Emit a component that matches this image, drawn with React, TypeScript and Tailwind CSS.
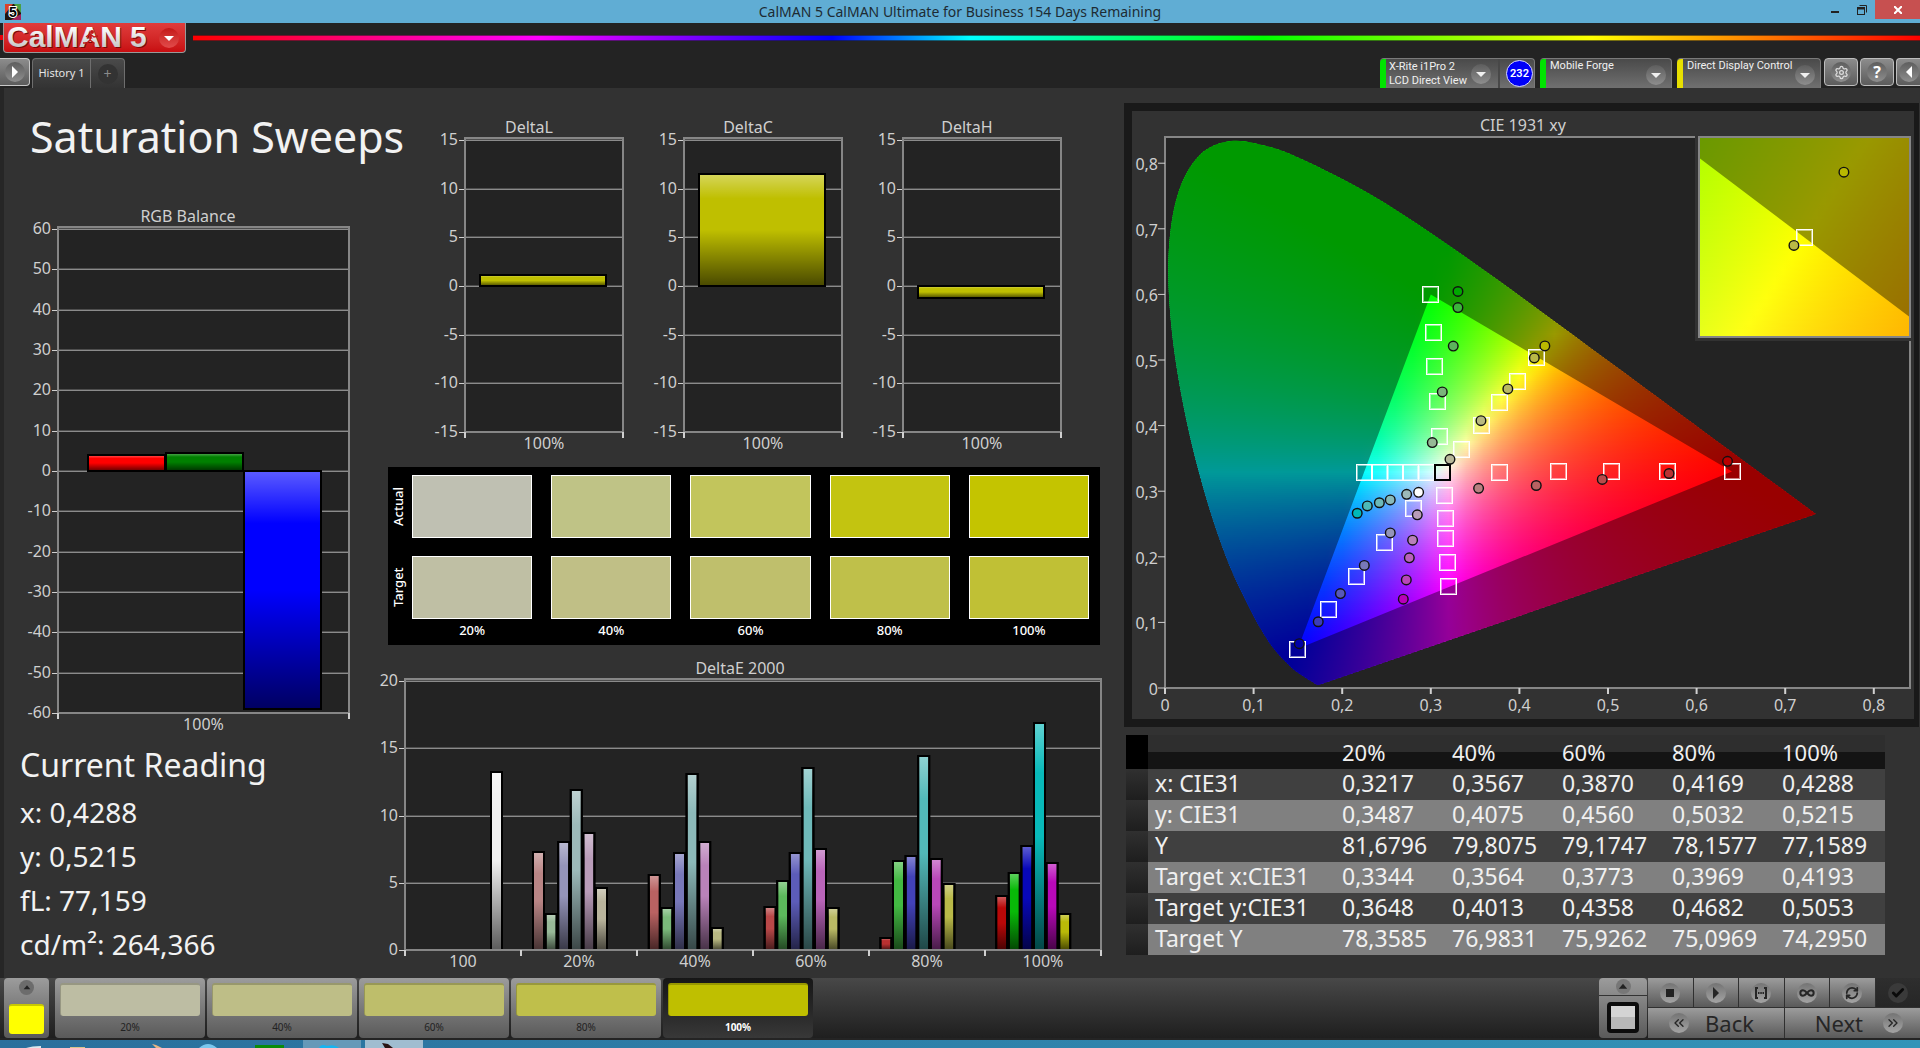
import React, { useMemo } from 'react';
import { Settings, RefreshCw, Infinity as InfinityIcon, Check, ChevronsLeft, ChevronsRight } from 'lucide-react';

interface Bar {
  x: number;
  width: number;
  value: number;
  color: string;
}

interface ColumnChartProps {
  title: string;
  titleX: number;
  width: number;
  height: number;
  plot: { left: number; top: number; right: number; bottom: number };
  min: number;
  max: number;
  step: number;
  categories: string[];
  bars: Bar[];
}

type Point = [number, number];

const ColumnChart: React.FC<ColumnChartProps> = ({ title, titleX, width, height, plot, min, max, step, categories, bars }) => {
  const top = plot.top + 2;
  const toY = (v: number) => Math.round(top + ((max - v) / (max - min)) * (plot.bottom - top));
  const ticks: number[] = [];
  for (let v = min; v <= max; v += step) ticks.push(v);
  const slot = (plot.right - plot.left) / categories.length;
  const id = title.replace(/\s/g, '');

  return (
    <svg viewBox={`0 0 ${width} ${height}`} className="block h-auto w-full" fontSize="16" fill="#cfcfcf">
      <defs>
        <linearGradient id={`shade-${id}`} x1="0" y1="0" x2="0" y2="1">
          <stop offset="0" stopColor="#fff" stopOpacity="0.36" />
          <stop offset="0.22" stopColor="#fff" stopOpacity="0" />
          <stop offset="0.5" stopColor="#000" stopOpacity="0" />
          <stop offset="1" stopColor="#000" stopOpacity="0.62" />
        </linearGradient>
      </defs>
      <text x={titleX} y={plot.top - 5} textAnchor="middle">{title}</text>
      <rect x={plot.left} y={plot.top} width={plot.right - plot.left} height={plot.bottom - plot.top} fill="#232323" />
      {ticks.map((v) => (
        <g key={v} shapeRendering="crispEdges">
          <rect x={plot.left} y={toY(v) - 1} width={plot.right - plot.left} height="1" fill="#4e4e4e" />
          <rect x={plot.left} y={toY(v)} width={plot.right - plot.left} height="1" fill="#8b8b8b" />
          <rect x={plot.left - 6} y={toY(v)} width="6" height="1" fill="#d0d0d0" />
          <text x={plot.left - 7} y={toY(v) + 5} textAnchor="end">{v}</text>
        </g>
      ))}
      {bars.map((bar, i) => {
        const y = Math.min(toY(bar.value), toY(0));
        const h = Math.abs(toY(bar.value) - toY(0));
        return (
          <g key={i} stroke="#000" strokeWidth="2">
            <rect x={bar.x} y={y} width={bar.width} height={h} fill={bar.color} />
            <rect x={bar.x} y={y} width={bar.width} height={h} fill={`url(#shade-${id})`} />
          </g>
        );
      })}
      <rect x={plot.left} y={plot.top} width={plot.right - plot.left} height={plot.bottom - plot.top} fill="none" stroke="#868686" strokeWidth="2" />
      {categories.map((c, i) => (
        <text key={c} x={plot.left + slot * (i + 0.5)} y={plot.bottom + 17} textAnchor="middle">{c}</text>
      ))}
      {[...categories, 'end'].map((c, i) => (
        <rect key={c} x={plot.left + slot * i - 1} y={plot.bottom} width="2" height="6" fill="#d0d0d0" />
      ))}
    </svg>
  );
};

// Spectral locus, CIE 1931 2 degree observer
const LOCUS: Point[] = [
  [0.1741, 0.005], [0.1714, 0.0051], [0.1644, 0.0109], [0.1566, 0.0177], [0.144, 0.0297], [0.1241, 0.0578],
  [0.1096, 0.0868], [0.0913, 0.1327], [0.0687, 0.2007], [0.0454, 0.295], [0.0235, 0.4127], [0.0082, 0.5384],
  [0.0039, 0.6548], [0.0139, 0.7502], [0.0389, 0.812], [0.0743, 0.8338], [0.1142, 0.8262], [0.1547, 0.8059],
  [0.2296, 0.7543], [0.3016, 0.6923], [0.3731, 0.6245], [0.4441, 0.5547], [0.5125, 0.4866], [0.5752, 0.4242],
  [0.627, 0.3725], [0.6658, 0.334], [0.6915, 0.3083], [0.719, 0.2809], [0.7347, 0.2653],
];

const GAMUT: Point[] = [[0.64, 0.33], [0.3, 0.6], [0.15, 0.06]];

const TARGETS: Point[] = [
  [0.3766, 0.329], [0.444, 0.331], [0.504, 0.331], [0.567, 0.331], [0.64, 0.331],
  [0.299, 0.6], [0.3025, 0.542], [0.304, 0.4905], [0.3074, 0.437], [0.3096, 0.3835],
  [0.3344, 0.3648], [0.3564, 0.4013], [0.3773, 0.4358], [0.3969, 0.4682], [0.4193, 0.5053],
  [0.2243, 0.329], [0.242, 0.329], [0.2602, 0.329], [0.277, 0.329], [0.2946, 0.329],
  [0.3145, 0.294], [0.3163, 0.2597], [0.3163, 0.2285], [0.318, 0.1917], [0.3194, 0.1556],
  [0.2795, 0.275], [0.2475, 0.223], [0.216, 0.1715], [0.184, 0.12], [0.1486, 0.06],
];

const MEASURED: [number, number, string][] = [
  [0.354, 0.3044, '#b98080'], [0.4191, 0.3087, '#b96262'], [0.4936, 0.318, '#b94a4a'], [0.569, 0.327, '#b93232'], [0.635, 0.3455, '#b80000'],
  [0.3307, 0.6045, '#00a800'], [0.3307, 0.58, '#3cb43c'], [0.3254, 0.5212, '#5cb45c'], [0.313, 0.4514, '#7ab47a'], [0.3017, 0.3742, '#96b896'],
  [0.3217, 0.3487, '#b9b99a'], [0.3567, 0.4075, '#b9b980'], [0.387, 0.456, '#b9b962'], [0.4169, 0.5032, '#b9b946'], [0.4288, 0.5215, '#b9b900'],
  [0.2863, 0.2983, '#ffffff'],
  [0.2728, 0.2952, '#9cb9b9'], [0.2543, 0.2867, '#88b9b9'], [0.242, 0.2824, '#6cb9b9'], [0.2284, 0.2775, '#4cb9b9'], [0.217, 0.2664, '#00b9b9'],
  [0.2848, 0.264, '#b99cb9'], [0.2795, 0.2254, '#b980b9'], [0.2758, 0.1985, '#b962b9'], [0.2724, 0.1648, '#b946b9'], [0.269, 0.1354, '#b900b9'],
  [0.2543, 0.2364, '#9494b9'], [0.225, 0.1868, '#7878b9'], [0.198, 0.144, '#5858b9'], [0.173, 0.101, '#3c3cb9'], [0.1516, 0.0675, '#0000a8'],
];

// Brightest in-range RGB for a chromaticity, negative channels cut to zero
const chromaColor = (x: number, y: number) => {
  const X = x / y;
  const Z = (1 - x - y) / y;
  const rgb = [
    3.2406 * X - 1.5372 - 0.4986 * Z,
    -0.9689 * X + 1.8758 + 0.0415 * Z,
    0.0557 * X - 0.204 + 1.057 * Z,
  ].map((c) => Math.max(0, c));
  const peak = Math.max(...rgb);
  return `rgb(${rgb.map((c) => Math.round((c / peak) * 255)).join(',')})`;
};

interface MarkerProps {
  x: number;
  y: number;
  color: string;
}

const TargetMarker: React.FC<MarkerProps> = ({ x, y, color }) => (
  <g fill="none" stroke={color}>
    <rect x={Math.round(x) - 7.5} y={Math.round(y) - 7.5} width="16" height="16" />
    <rect x={Math.round(x) - 6.5} y={Math.round(y) - 6.5} width="14" height="14" strokeOpacity="0.5" />
  </g>
);

interface Domain {
  x0: number;
  x1: number;
  y0: number;
  y1: number;
}

interface ChromaFieldProps {
  id: string;
  left: number;
  top: number;
  width: number;
  height: number;
  domain: Domain;
  colorStep: number;
}

const ChromaField: React.FC<ChromaFieldProps> = ({ id, left, top, width, height, domain, colorStep }) => {
  const { x0, x1, y0, y1 } = domain;
  const sx = (x: number) => left + ((x - x0) / (x1 - x0)) * width;
  const sy = (y: number) => top + ((y1 - y) / (y1 - y0)) * height;

  const rows = useMemo(() => {
    const out = [];
    const end = Math.min(x1, 0.76);
    const count = Math.ceil((end - x0) / colorStep);
    for (let row = 0; row < height; row += 2) {
      const y = Math.max(0.002, y1 - ((row + 1) / height) * (y1 - y0));
      const stops = [];
      for (let i = 0; i <= count; i++) {
        stops.push(<stop key={i} offset={i / count} stopColor={chromaColor(x0 + ((end - x0) * i) / count, y)} />);
      }
      out.push(
        <g key={row}>
          <linearGradient id={`${id}-${row}`} gradientUnits="userSpaceOnUse" x1={sx(x0)} x2={sx(end)} y1="0" y2="0">{stops}</linearGradient>
          <rect x={left} y={top + row} width={sx(end) - left} height="3" fill={`url(#${id}-${row})`} />
        </g>
      );
    }
    return out;
  }, []);

  let locus = `M${sx(LOCUS[0][0])} ${sy(LOCUS[0][1])}`;
  for (let i = 0; i < LOCUS.length - 1; i++) {
    const a = LOCUS[Math.max(0, i - 1)];
    const b = LOCUS[i];
    const c = LOCUS[i + 1];
    const d = LOCUS[Math.min(LOCUS.length - 1, i + 2)];
    locus += `C${sx(b[0] + (c[0] - a[0]) / 6)} ${sy(b[1] + (c[1] - a[1]) / 6)} ${sx(c[0] - (d[0] - b[0]) / 6)} ${sy(c[1] - (d[1] - b[1]) / 6)} ${sx(c[0])} ${sy(c[1])}`;
  }
  locus += 'Z';
  const triangle = `M${GAMUT.map(([x, y]) => `${sx(x)} ${sy(y)}`).join('L')}Z`;
  const inside = ([x, y]: Point) => x > x0 && x < x1 && y > y0 && y < y1;

  return (
    <g>
      <clipPath id={`${id}-frame`}><rect x={left} y={top} width={width} height={height} /></clipPath>
      <clipPath id={`${id}-locus`}><path d={locus} /></clipPath>
      <g clipPath={`url(#${id}-frame)`}>
        <g clipPath={`url(#${id}-locus)`}>
          {rows}
          <path d={`M${left} ${top}h${width}v${height}h${-width}Z${triangle}`} fill="#000" fillOpacity="0.4" fillRule="evenodd" />
        </g>
      </g>
      {TARGETS.filter(inside).map(([x, y], i) => (
        <TargetMarker key={i} x={sx(x)} y={sy(y)} color="#fff" />
      ))}
      {inside([0.3127, 0.329]) && (
        <rect x={Math.round(sx(0.3127)) - 7} y={Math.round(sy(0.329)) - 7} width="15" height="15" fill="none" stroke="#000" strokeWidth="2" />
      )}
      {MEASURED.filter(([x, y]) => inside([x, y])).map(([x, y, color], i) => (
        <circle key={i} cx={sx(x)} cy={sy(y)} r="4.800" fill={color} stroke="#111" strokeWidth="1.400" />
      ))}
    </g>
  );
};

const CieChart = () => {
  const left = 33;
  const bottom = 577;
  const xTicks = [0, 1, 2, 3, 4, 5, 6, 7, 8];
  const label = (n: number) => (n === 0 ? '0' : `0,${n}`);
  return (
    <svg viewBox="0 0 782 608" className="block h-auto w-full" fontSize="16" fill="#cfcfcf">
      <text x="391" y="20" textAnchor="middle">CIE 1931 xy</text>
      <rect x={left} y="26" width="745" height="551" fill="#232323" />
      <ChromaField id="gamut" left={left} top={26} width={745} height={551} domain={{ x0: 0, x1: 0.841, y0: 0, y1: 0.84 }} colorStep={0.02} />
      <rect x={left} y="26" width="745" height="551" fill="none" stroke="#868686" strokeWidth="2" />
      {xTicks.map((n) => (
        <g key={n}>
          <rect x={left + n * 88.6 - 1} y={bottom} width="2" height="6" fill="#d0d0d0" />
          <text x={left + n * 88.6} y="600" textAnchor="middle">{label(n)}</text>
          <rect x={left - 7} y={bottom - n * 65.6 - 0.5} width="7" height="1" fill="#d0d0d0" />
          <text x={left - 7} y={bottom - n * 65.6 + 7} textAnchor="end">{label(n)}</text>
        </g>
      ))}
      <rect x="563" y="22" width="219" height="208" fill="#323232" />
      <ChromaField id="inset" left={567} top={26} width={210} height={200} domain={{ x0: 0.3943, x1: 0.4443, y0: 0.4803, y1: 0.5303 }} colorStep={0.002} />
      <rect x="567" y="26" width="211" height="200" fill="none" stroke="#868686" strokeWidth="2" />
    </svg>
  );
};

const SERIES = [
  { label: '20%', colors: ['#b98585', '#98b998', '#9494b9', '#9cb9b9', '#b99cb9', '#b9b49c'], values: [7.3, 2.7, 8.0, 11.9, 8.7, 4.6] },
  { label: '40%', colors: ['#b96262', '#7ab97a', '#7878b9', '#8cb9b9', '#b982b9', '#b9b982'], values: [5.6, 3.1, 7.2, 13.1, 8.0, 1.6] },
  { label: '60%', colors: ['#b94848', '#5cb95c', '#5c5cb9', '#6eb9b9', '#b964b9', '#b9b964'], values: [3.2, 5.1, 7.2, 13.5, 7.5, 3.1] },
  { label: '80%', colors: ['#b93030', '#42b942', '#4242b9', '#52b9b9', '#b948b9', '#b9b948'], values: [0.9, 6.6, 7.0, 14.4, 6.8, 4.9] },
  { label: '100%', colors: ['#b90808', '#08b908', '#0808b9', '#08b9b9', '#b908b9', '#b9b908'], values: [4.0, 5.7, 7.7, 16.9, 6.5, 2.7] },
];

const DELTA_E_BARS: Bar[] = [
  { x: 115, width: 11, value: 13.2, color: '#f0f0f0' },
  ...SERIES.flatMap((s, g) =>
    s.values.map((value, i) => ({ x: 157 + 115.8 * g + i * 12.6, width: 11, value, color: s.colors[i] }))
  ),
];

const DELTAS = [
  { title: 'DeltaL', value: 1.1 },
  { title: 'DeltaC', value: 11.5 },
  { title: 'DeltaH', value: -1.2 },
];

const SWATCHES = [
  { label: '20%', actual: 'bg-[#bfc0b2]', target: 'bg-[#bfbfa4]' },
  { label: '40%', actual: 'bg-[#bfc386]', target: 'bg-[#c0bf86]' },
  { label: '60%', actual: 'bg-[#c2c55c]', target: 'bg-[#bfbf6c]' },
  { label: '80%', actual: 'bg-[#c3c410]', target: 'bg-[#bfc04a]' },
  { label: '100%', actual: 'bg-[#c4c400]', target: 'bg-[#c0c035]' },
];

const PATTERNS = [
  { label: '20%', color: 'bg-[#bdbda3]' },
  { label: '40%', color: 'bg-[#bebe87]' },
  { label: '60%', color: 'bg-[#bebe6b]' },
  { label: '80%', color: 'bg-[#bfbf4b]' },
  { label: '100%', color: 'bg-[#bfbf00]' },
];

const TABLE_ROWS = [
  ['x: CIE31', '0,3217', '0,3567', '0,3870', '0,4169', '0,4288'],
  ['y: CIE31', '0,3487', '0,4075', '0,4560', '0,5032', '0,5215'],
  ['Y', '81,6796', '79,8075', '79,1747', '78,1577', '77,1589'],
  ['Target x:CIE31', '0,3344', '0,3564', '0,3773', '0,3969', '0,4193'],
  ['Target y:CIE31', '0,3648', '0,4013', '0,4358', '0,4682', '0,5053'],
  ['Target Y', '78,3585', '76,9831', '75,9262', '75,0969', '74,2950'],
];

const Knob = ({ children, className = 'size-5' }: { children: React.ReactNode; className?: string }) => (
  <span className={`flex shrink-0 items-center justify-center rounded-full bg-linear-to-b from-[#5e5e5e] to-[#8e8e8e] ${className}`}>{children}</span>
);

const Arrow = ({ d, className = 'size-3' }: { d: string; className?: string }) => (
  <svg viewBox="0 0 12 12" className={className} fill="currentColor"><path d={d} /></svg>
);

const DOWN = 'M1 4h10l-5 5z';
const UP = 'M6 2l5 6H1z';
const LEFT = 'M9 0v12L3 6z';
const RIGHT = 'M3 0v12l6-6z';

const TitleBar = () => (
  <header className="relative flex h-[23px] items-center justify-center bg-[#60add4] text-[#1d2b33]">
    <svg viewBox="0 0 16 16" className="absolute left-[5px] size-4 overflow-visible">
      <rect width="16" height="16" fill="#20160f" />
      <path d="M0 0h8L0 10z" fill="#d8432b" />
      <path d="M16 0v9L9 0z" fill="#4aa044" />
      <path d="M16 16H6l10-6z" fill="#a3215c" />
      <text x="8" y="13" textAnchor="middle" fontSize="14" fontFamily="Liberation Sans, sans-serif" fontWeight="bold" fill="#000" stroke="#fff" strokeWidth="2" paintOrder="stroke">5</text>
    </svg>
    <h1 className="text-[14px] leading-5">CalMAN 5 CalMAN Ultimate for Business 154 Days Remaining</h1>
    <div className="absolute top-0 right-0 flex h-[19px]">
      <button aria-label="Minimize" className="flex w-[26px] items-end justify-center pb-[6px]"><span className="h-[2px] w-2 bg-[#222]" /></button>
      <button aria-label="Restore" className="flex w-[27px] items-center justify-center">
        <svg viewBox="0 0 10 10" className="size-[10px]" fill="none" stroke="#222">
          <path d="M2.500 .500h7v7" />
          <rect x=".5" y="2.500" width="7" height="7" />
          <path d="M0 3.500h8" strokeWidth="2" />
        </svg>
      </button>
      <button aria-label="Close" className="flex w-[45px] items-center justify-center bg-[#c75050]">
        <svg viewBox="0 0 8 8" className="size-2" stroke="#fff" strokeWidth="2"><path d="M0 0l8 8M8 0L0 8" /></svg>
      </button>
    </div>
  </header>
);

const BrandRow = () => (
  <div className="flex h-[35px]">
    <div className="mt-3 h-[5px] w-[3px] bg-red-600" />
    <button aria-label="CalMAN menu" className="flex h-[30px] w-[183px] items-center rounded-b-[4px] border border-t-0 border-[#999] bg-linear-to-b from-[#e03c3c] to-[#c80c10]">
      <svg viewBox="0 0 150 30" className="h-[30px] w-[150px] overflow-visible">
        <defs>
          <linearGradient id="chrome" x1="0" y1="0" x2="0" y2="1">
            <stop offset="0.2" stopColor="#fff" />
            <stop offset="1" stopColor="#b8b8b8" />
          </linearGradient>
        </defs>
        <g fontFamily="Liberation Sans, sans-serif" fontWeight="bold" fontSize="30">
          <text x="4" y="25" fill="#7c0808">CalMAN</text>
          <text x="127" y="25" fill="#7c0808">5</text>
          <text x="3" y="24" fill="url(#chrome)">CalMAN</text>
          <text x="126" y="24" fill="url(#chrome)">5</text>
        </g>
        <circle cx="88" cy="9" r="2" fill="#c01818" />
        <path d="M82 14l4-3 4 3 4-1M87 12l-1 5 4 3-1 4M86 17l-3 3-4 0" fill="none" stroke="#c01818" strokeWidth="1.500" />
      </svg>
      <span className="ml-[5px] flex size-5 items-center justify-center rounded-full bg-linear-to-b from-[#c41616] to-[#e24a4a] text-white"><Arrow d={DOWN} /></span>
    </button>
    <div className="mt-3 ml-[7px] h-[6px] flex-1 border-y border-[#1a1a1a]/60 bg-[linear-gradient(to_right,#ff0000_0%,#ff00ff_20%,#0000ff_37%,#00ffff_45%,#00ff00_62%,#ffff00_81%,#ff0000_100%)]" />
  </div>
);

const DEVICE = "flex h-[30px] items-start rounded-t-[4px] border-t border-r border-[#7a7a7a] bg-linear-to-b from-[#4a4a4a] to-[#707070] text-left font-['Roboto','Noto_Sans',sans-serif] text-[11px] leading-[14px] text-[#f0f0f0]";
const SQUARE = 'flex h-7 items-center justify-center rounded-[4px] border border-[#bdbdbd] bg-linear-to-b from-[#8c8c8c] to-[#5c5c5c] text-white';

const ToolRow = () => (
  <div className="flex h-[30px]">
    <button aria-label="Expand panel" className="flex h-7 w-[30px] items-center justify-center rounded-r-[4px] border border-l-0 border-[#c8c8c8] bg-linear-to-b from-[#8c8c8c] to-[#5c5c5c] text-white">
      <Knob><Arrow d={RIGHT} /></Knob>
    </button>
    <div className="ml-[2px] flex rounded-t-[4px] border border-b-0 border-[#6e6e6e] bg-linear-to-b from-[#4a4a4a] to-[#333] text-[#e4e4e4]">
      <button className="w-[58px] border-r border-[#6e6e6e] text-[11px]">History 1</button>
      <button aria-label="Add history" className="flex w-[33px] items-center justify-center"><span className="flex size-5 items-center justify-center rounded-full bg-[#333] text-sm leading-5 text-[#8a8a8a]">+</span></button>
    </div>
    <div className="ml-auto flex">
      <div className={`${DEVICE} w-[155px]`}>
        <span className="h-full w-[6px] shrink-0 rounded-tl-[4px] bg-[#00e400]" />
        <button className="flex h-full flex-1 items-center border-r-2 border-[#484848] pl-[3px] text-left">
          <span className="w-[82px] whitespace-nowrap">X-Rite i1Pro 2<br />LCD Direct View</span>
          <Knob><Arrow d={DOWN} /></Knob>
        </button>
        <span className="m-px ml-[6px] flex size-[27px] shrink-0 items-center justify-center rounded-full border border-[#d8d8ff] bg-[#0000f8] text-[11px] font-semibold text-white">232</span>
      </div>
      <button className={`${DEVICE} ml-[5px] w-[132px] pr-[5px]`}>
        <span className="h-full w-[6px] shrink-0 rounded-tl-[4px] bg-[#00e400]" />
        <span className="ml-[4px] flex-1">Mobile Forge</span>
        <Knob className="mt-[6px] size-5"><Arrow d={DOWN} /></Knob>
      </button>
      <button className={`${DEVICE} ml-[5px] w-[144px] pr-[5px]`}>
        <span className="h-full w-[6px] shrink-0 rounded-tl-[4px] bg-[#e8e000]" />
        <span className="ml-[4px] flex-1 whitespace-nowrap">Direct Display Control</span>
        <Knob className="mt-[6px] size-5"><Arrow d={DOWN} /></Knob>
      </button>
      <button aria-label="Settings" className={`${SQUARE} ml-[3px] w-[34px]`}><Knob><Settings className="size-[15px] text-[#ddd]" /></Knob></button>
      <button aria-label="Help" className={`${SQUARE} ml-[2px] w-[34px]`}><Knob><span className="text-base leading-5 font-bold">?</span></Knob></button>
      <button aria-label="Collapse panel" className={`${SQUARE} ml-[2px] w-6 rounded-r-none border-r-0`}><Knob><Arrow d={LEFT} /></Knob></button>
    </div>
  </div>
);

const Readings = () => (
  <section className="pl-4 text-[#f2f2f2]">
    <h2 className="text-[32px] leading-[50px]">Current Reading</h2>
    <div className="text-[28px] leading-[44px]">
      <p>x: 0,4288</p>
      <p>y: 0,5215</p>
      <p>fL: 77,159</p>
      <p>cd/m²: 264,366</p>
    </div>
  </section>
);

const ColorCompare = () => (
  <section className="mt-[11px] mr-5 ml-3 flex h-[178px] bg-black pt-2 text-[13px] font-medium text-white">
    <div className="mr-1 flex w-5 flex-col gap-[18px] leading-[20px]">
      <span className="flex h-[63px] rotate-180 items-center justify-center [writing-mode:vertical-rl]">Actual</span>
      <span className="flex h-[63px] rotate-180 items-center justify-center [writing-mode:vertical-rl]">Target</span>
    </div>
    <div className="mr-[11px] flex flex-1 gap-[19px]">
      {SWATCHES.map((s) => (
        <div key={s.label} className="flex flex-1 flex-col text-center">
          <div className={`h-[63px] border border-white ${s.actual}`} />
          <div className={`mt-[18px] h-[63px] border border-white ${s.target}`} />
          <span className="leading-[22px]">{s.label}</span>
        </div>
      ))}
    </div>
  </section>
);

const DataTable = () => (
  <div className="mt-2 mr-[35px] ml-[6px]">
    <table className="w-full table-fixed text-left text-[23px] leading-[28px] whitespace-nowrap text-[#f0f0f0]">
      <colgroup>
        <col className="w-[22px]" />
        <col className="w-[187px]" />
        <col span={5} />
      </colgroup>
      <thead>
        <tr className="h-[34px] bg-[linear-gradient(#2e2e2e_50%,#141414_50%)] text-[22px]">
          <th className="bg-black p-0" />
          <th className="p-0" />
          {SWATCHES.map((s) => <th key={s.label} className="p-0 pl-[7px] font-normal">{s.label}</th>)}
        </tr>
      </thead>
      <tbody>
        {TABLE_ROWS.map(([name, ...values]) => (
          <tr key={name} className="h-[31px] bg-[#404040] align-top even:bg-[#808080]">
            <td className="bg-linear-to-b from-[#303030] to-[#1e1e1e] p-0" />
            <th scope="row" className="p-0 pl-[7px] font-normal">{name}</th>
            {values.map((v, i) => <td key={i} className="p-0 pl-[7px]">{v}</td>)}
          </tr>
        ))}
      </tbody>
    </table>
  </div>
);

const STEEL = 'bg-linear-to-b from-[#9c9c9c] to-[#5a5a5a]';
const DarkKnob = ({ children }: { children: React.ReactNode }) => (
  <span className="flex size-5 shrink-0 items-center justify-center rounded-full bg-linear-to-b from-[#747474] to-[#a4a4a4] text-[#262626]">{children}</span>
);

const BottomBar = () => (
  <footer className="flex h-[62px] border-b-2 border-[#242424] bg-linear-to-b from-[#484848] to-[#1f1f1f] pl-1">
    <button aria-label="Open pattern" className={`flex w-[45px] flex-col items-center rounded-[4px] ${STEEL}`}>
      <span className="mt-[2px] flex size-[15px] items-center justify-center rounded-full bg-[#6c6c6c] text-[#222]"><Arrow d={UP} className="size-2" /></span>
      <span className="mt-[9px] h-[30px] w-[35px] rounded-[3px] border-t-2 border-[#c8c800] bg-[#ffff00]" />
    </button>
    <div className="ml-[6px] flex gap-[2px]">
      {PATTERNS.map((p, i) => (
        <button
          key={p.label}
          className={`flex w-[150px] flex-col items-center rounded-[4px] pt-[5px] text-[10px] ${i === 4 ? 'bg-linear-to-b from-[#161616] to-[#383838] font-bold text-white' : `${STEEL} text-[#222]`}`}
        >
          <span className={`h-9 w-[140px] rounded-[3px] border-t-2 border-l border-black/20 ${p.color}`} />
          <span className="leading-[22px]">{p.label}</span>
        </button>
      ))}
    </div>
    <div className="ml-auto flex">
      <div className={`flex w-12 flex-col items-center rounded-[4px] ${STEEL}`}>
        <button aria-label="Show meter" className="flex h-[18px] w-full items-center justify-center border-b border-[#333]"><span className="flex size-[15px] items-center justify-center rounded-full bg-[#777] text-[#222]"><Arrow d={UP} className="size-[10px]" /></span></button>
        <button aria-label="Preview" className="mt-[6px] h-[31px] w-8 rounded-[4px] border-4 border-[#0c0c0c] bg-[linear-gradient(#d4d4d4_50%,#b8b8b8_50%)]" />
      </div>
      <div className="ml-px flex w-[272px] flex-col gap-px bg-[#303030]">
        <div className="grid h-[30px] grid-cols-6 gap-px *:flex *:items-center *:justify-center">
          <button aria-label="Stop" className={STEEL}><DarkKnob><span className="size-2 bg-[#222]" /></DarkKnob></button>
          <button aria-label="Play" className={STEEL}><DarkKnob><Arrow d={RIGHT} className="size-3" /></DarkKnob></button>
          <button aria-label="Read series" className={STEEL}>
            <DarkKnob>
              <svg viewBox="0 0 14 12" className="h-3 w-[14px]" fill="none" stroke="currentColor" strokeWidth="2">
                <path d="M4 1H2v10h2M10 1h2v10h-2" />
                <path d="M4 6h1.500M6.300 6h1.500M8.500 6h1.500" />
              </svg>
            </DarkKnob>
          </button>
          <button aria-label="Continuous" className={STEEL}><DarkKnob><InfinityIcon className="size-4" strokeWidth={3} /></DarkKnob></button>
          <button aria-label="Repeat" className={STEEL}><DarkKnob><RefreshCw className="size-[14px]" strokeWidth={3} /></DarkKnob></button>
          <button aria-label="Accept" className="bg-linear-to-b from-[#2e2e2e] to-[#262626]"><span className="flex size-5 items-center justify-center rounded-full bg-[#3a3a3a] text-[#0a0a0a]"><Check className="size-[14px]" strokeWidth={5} /></span></button>
        </div>
        <div className="grid h-[30px] grid-cols-2 gap-px text-[22px] leading-[30px] text-[#262626]">
          <button className={`flex items-center gap-4 pl-[21px] ${STEEL}`}><DarkKnob><ChevronsLeft className="size-4" /></DarkKnob>Back</button>
          <button className={`flex items-center justify-end gap-5 pr-[17px] ${STEEL}`}>Next<DarkKnob><ChevronsRight className="size-4" /></DarkKnob></button>
        </div>
      </div>
    </div>
  </footer>
);

const TaskBar = () => (
  <div className="relative h-2 bg-linear-to-r from-[#2a6f9c] to-[#3294b8]">
    <svg viewBox="0 0 430 8" className="absolute top-0 left-0 h-2 w-[430px]">
      <path d="M26 8q6-2 15-2v2z" fill="#dbe8ee" />
      <path d="M70 8v-1h15v1z" fill="#d8c58c" />
      <path d="M152 4l4 1 6 3h-6z" fill="#e8b584" />
      <path d="M199 8q9-8 18 0z" fill="#7cc7ee" />
      <path d="M255 5h29v3h-29z" fill="#0a8c0a" />
      <path d="M303 0h58v8h-58z" fill="#6699b8" />
      <path d="M319 8q2-5 8-2 8-2 12 2z" fill="#18b4f0" />
      <path d="M365 0h58v8h-58z" fill="#a0bdd0" />
      <path d="M382 3l6 1 5 4h-8z" fill="#2a1414" />
    </svg>
  </div>
);

const App: React.FC = () => {
  return (
    <div className="flex min-h-screen flex-col bg-[#232323] font-['Noto_Sans','Open_Sans',sans-serif]">
      <TitleBar />
      <BrandRow />
      <ToolRow />
      <main className="grid flex-1 grid-cols-[372fr_744fr_800fr] border-l-4 border-[#262626] bg-[#323232]">
        <div className="min-w-0">
          <h2 className="mt-6 pl-[26px] text-[43px] leading-[50px] whitespace-nowrap text-[#f2f2f2]">Saturation Sweeps</h2>
          <div className="mt-[38px]">
            <ColumnChart
              title="RGB Balance" titleX={184} width={372} height={540}
              plot={{ left: 54, top: 27, right: 345, bottom: 513 }}
              min={-60} max={60} step={10} categories={['100%']}
              bars={[
                { x: 84, width: 77, value: 4, color: '#ff0000' },
                { x: 162, width: 77, value: 4.4, color: '#008000' },
                { x: 240, width: 77, value: -59, color: '#0000ff' },
              ]}
            />
          </div>
          <Readings />
        </div>
        <div className="min-w-0">
          <div className="mt-7 mr-[42px] ml-[45px] grid grid-cols-3">
            {DELTAS.map((d) => (
              <ColumnChart
                key={d.title} title={d.title} titleX={108} width={219} height={340}
                plot={{ left: 44, top: 22, right: 202, bottom: 316 }}
                min={-15} max={15} step={5} categories={['100%']}
                bars={[{ x: 59, width: 126, value: d.value, color: '#bfbf00' }]}
              />
            ))}
          </div>
          <ColorCompare />
          <ColumnChart
            title="DeltaE 2000" titleX={364} width={744} height={333}
            plot={{ left: 29, top: 34, right: 725, bottom: 305 }}
            min={0} max={20} step={5} categories={['100', '20%', '40%', '60%', '80%', '100%']}
            bars={DELTA_E_BARS}
          />
        </div>
        <div className="min-w-0">
          <section className="mt-[15px] mr-px ml-1 border-8 border-r-[5px] border-[#191919]">
            <CieChart />
          </section>
          <DataTable />
        </div>
      </main>
      <BottomBar />
      <TaskBar />
    </div>
  );
};

export default App;
